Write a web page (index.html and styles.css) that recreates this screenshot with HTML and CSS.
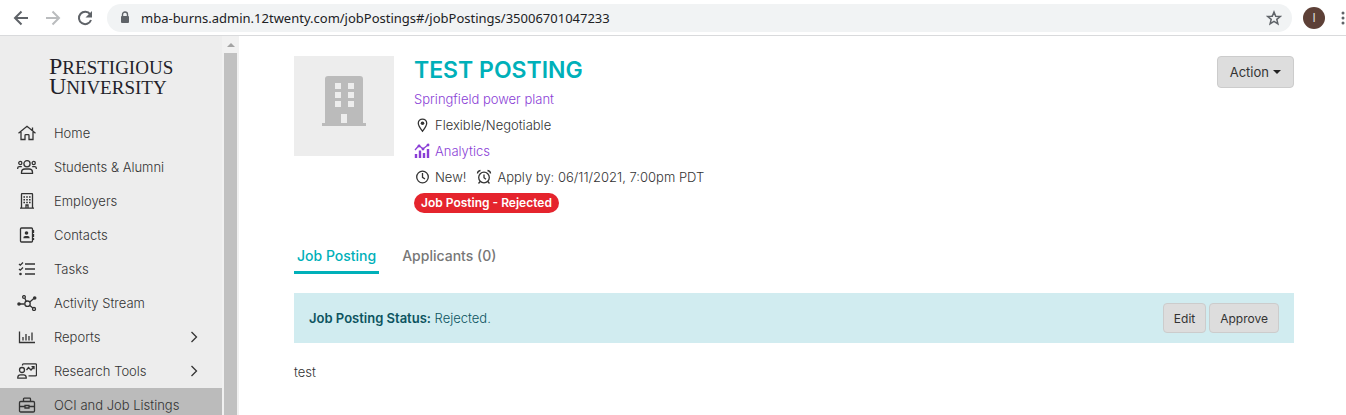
FILE: index.html
```html
<!DOCTYPE html>
<html lang="en">

<head>
	<title>Job Posting</title>
	<meta charset="utf-8">
	<meta name="viewport" content="width=device-width, initial-scale=1.0">
	<link rel="stylesheet" href="styles.css">
</head>

<body>
	<!-- browser bar -->
	<header class="browser">
		<button class="browser-btn" aria-label="Back">
			<svg width="16" height="16" viewBox="0 0 16 16" fill="none" stroke="#5f6368" stroke-width="2"><path d="M15 8H2M8.500 1.500L2 8l6.500 6.500"/></svg>
		</button>
		<button class="browser-btn" aria-label="Forward">
			<svg width="16" height="16" viewBox="0 0 16 16" fill="none" stroke="#babcbe" stroke-width="2"><path d="M1 8h13M7.500 1.500L14 8l-6.500 6.500"/></svg>
		</button>
		<button class="browser-btn" aria-label="Reload">
			<svg width="16" height="16" viewBox="0 0 16 16"><path d="M13.200 4.300A6.200 6.200 0 1 0 14 10" fill="none" stroke="#5f6368" stroke-width="2"/><path d="M15 1v6.500H8.500z" fill="#5f6368"/></svg>
		</button>
		<div class="address">
			<svg width="10" height="14" viewBox="0 0 10 14"><path d="M2.500 6V3.500a2.500 2.500 0 0 1 5 0V6" fill="none" stroke="#5f6368" stroke-width="1.400"/><rect x="1" y="5" width="8" height="7" rx="1" fill="#5f6368"/></svg>
			<input class="address-input" type="text" aria-label="Address" value="mba-burns.admin.12twenty.com/jobPostings#/jobPostings/35006701047233">
			<svg width="16" height="16" viewBox="0 0 16 16" fill="none" stroke="#5f6368" stroke-width="1.500"><path d="M8 2l1.700 4.200 4.600.300-3.500 2.900 1.100 4.400L8 11.400l-3.900 2.400 1.100-4.400-3.500-2.900 4.600-.300z"/></svg>
		</div>
		<button class="profile" aria-label="Profile">I</button>
		<button class="browser-menu" aria-label="Menu">
			<svg width="4" height="14" viewBox="0 0 4 14" fill="#5f6368"><circle cx="2" cy="2" r="1.500"/><circle cx="2" cy="7" r="1.500"/><circle cx="2" cy="12" r="1.500"/></svg>
		</button>
	</header>

	<div class="app">
		<aside class="sidebar">
			<div class="logo">
				<div class="logo-line">PRESTIGIOUS</div>
				<div class="logo-line">UNIVERSITY</div>
			</div>
			<nav>
				<a class="nav-item" href="#">
					<svg class="icon" viewBox="0 0 20 16"><path d="M1.500 8.200L10 1.300l8.500 6.900M15.500 5.500V2.500M4 7v7.500h4V10.500q0-.800.800-.800h2.400q.800 0 .800.800v4h4V7"/></svg>
					<span>Home</span>
				</a>
				<a class="nav-item" href="#">
					<svg class="icon" viewBox="0 0 20 16"><circle cx="10" cy="4.800" r="3.100"/><circle cx="3.300" cy="4" r="1.600"/><circle cx="16.700" cy="4" r="1.600"/><path d="M4.500 14.300v-1.200a3.300 3.300 0 0 1 3.300-3.100h4.400a3.300 3.300 0 0 1 3.300 3.100v1.200zM.700 10V9a1.500 1.500 0 0 1 1.500-1.400h2.600M19.300 10V9a1.500 1.500 0 0 0-1.500-1.400h-2.600"/></svg>
					<span>Students &amp; Alumni</span>
				</a>
				<a class="nav-item" href="#">
					<svg class="icon" viewBox="0 0 20 16"><path d="M4.500 15V1.200q0-.500.500-.500h10q.500 0 .500.500V15M3 15.200h14M9 15v-3h2v3"/><path d="M7.200 3.200v8M10 3.200v8M12.800 3.200v8" stroke-width="1.600" stroke-dasharray="1.500 1.300"/></svg>
					<span>Employers</span>
				</a>
				<a class="nav-item" href="#">
					<svg class="icon" viewBox="0 0 20 16"><rect x="3.500" y="1" width="12" height="14" rx="1"/><path d="M16.500 3v3M16.500 7v3M16.500 11v2"/><circle cx="9.500" cy="6" r="1.800" class="solid"/><path class="solid" d="M6.300 11.300q0-2.300 2-2.300h2.400q2 0 2 2.300z"/></svg>
					<span>Contacts</span>
				</a>
				<a class="nav-item" href="#">
					<svg class="icon" viewBox="0 0 20 16"><path d="M2 3l1.300 1.200L6 1.500M2 8l1.300 1.200L6 6.500"/><circle cx="3.500" cy="13" r="1.300" class="solid"/><path d="M8 3h10M8 8h10M8 13h10" stroke-width="1.700"/></svg>
					<span>Tasks</span>
				</a>
				<a class="nav-item" href="#">
					<svg class="icon" viewBox="0 0 20 16"><circle cx="10.500" cy="8.700" r="2.700"/><circle cx="7" cy="2" r="1.400"/><circle cx="17" cy="14" r="1.500"/><circle cx="2" cy="9" r="1.800" class="solid"/><circle cx="17.700" cy="3" r="1.800" class="solid"/><path d="M3 9h4.500M7.800 3.300l1.400 3M12.800 7l4-3.500M12.800 10.500l3 2.500"/></svg>
					<span>Activity Stream</span>
				</a>
				<a class="nav-item" href="#">
					<svg class="icon" viewBox="0 0 20 16"><path d="M2.500 2.500v11h15.500M6 11.500V8M9 11.500V5M12 11.500V7M15 11.500V3.500"/></svg>
					<span>Reports</span>
					<svg class="chevron" viewBox="0 0 8 12"><path d="M1.500 1l5 5-5 5"/></svg>
				</a>
				<a class="nav-item" href="#">
					<svg class="icon" viewBox="0 0 20 16"><path d="M5.500 2.500V1.800q0-1 1-1h12q1 0 1 1v10q0 1-1 1h-7M9.500 7l2-2.500 2.500 2.500 2.800-3M14.500 3.700H17v2.500"/><circle cx="5" cy="7" r="2.500"/><path d="M.800 15.200v-1a2.500 2.500 0 0 1 2.500-2.300h3.400a2.500 2.500 0 0 1 2.500 2.300v1z"/></svg>
					<span>Research Tools</span>
					<svg class="chevron" viewBox="0 0 8 12"><path d="M1.500 1l5 5-5 5"/></svg>
				</a>
				<a class="nav-item active" href="#">
					<svg class="icon" viewBox="0 0 20 16"><rect x="2.500" y="4.500" width="15" height="10.500" rx="1.200"/><path d="M6.500 4V2q0-.800.800-.800h5.400q.800 0 .800.800v2M2.500 9.500h5.500M12 9.500h5.500M8 8.500h4v2.500H8z"/></svg>
					<span>OCI and Job Listings</span>
				</a>
			</nav>
		</aside>
		<div class="scrollbar">
			<span class="scroll-up"></span>
			<span class="scroll-thumb"></span>
		</div>

		<main class="content">
			<section class="posting">
				<div class="posting-image">
					<svg width="44" height="50" viewBox="0 0 44 50"><path fill="#bbb" d="M6 0h32q3 0 3 3v44h3v3H0v-3h3V3q0-3 3-3z"/><path fill="#ededed" d="M13 7h6v6h-6zM26 7h6v6h-6zM13 16h6v6h-6zM26 16h6v6h-6zM13 25h6v6h-6zM26 25h6v6h-6zM19 38h6v9h-6z"/></svg>
				</div>
				<div class="posting-info">
					<h1>TEST POSTING</h1>
					<div class="line"><a href="#">Springfield power plant</a></div>
					<div class="line">
						<svg class="small-icon" viewBox="0 0 16 16"><path d="M8.500 14.300C5.500 10.500 4.300 9 4.300 6.300a4.200 4.200 0 0 1 8.400 0C12.700 9 11.500 10.500 8.500 14.300z"/><circle cx="8.500" cy="6.300" r="1.800" class="solid"/></svg>
						<span>Flexible/Negotiable</span>
					</div>
					<div class="line">
						<a href="#">
							<svg class="small-icon" viewBox="0 0 16 16"><path d="M1 7l4-4.500 4 3.500 5.500-4.500"/><path d="M2 15v-4M6 15V7.500M10 15v-5M14 15V6" stroke-width="2.400"/><circle cx="5" cy="3" r=".800"/><circle cx="9" cy="6" r=".800"/><circle cx="14" cy="2" r=".800"/></svg>
							<span>Analytics</span>
						</a>
					</div>
					<div class="line">
						<svg class="small-icon" viewBox="0 0 16 16"><circle cx="8.500" cy="8" r="5.800"/><path d="M8.500 4v4.300l2.500 1.700"/></svg>
						<span>New!</span>
						<svg class="small-icon alarm" viewBox="0 0 16 16"><circle cx="8" cy="8.500" r="5.300"/><path d="M8 5.500v3.200l2 1.500M4.200 12.500l-1.700 2M11.800 12.500l1.700 2M1.500 4.500q0-2.500 3-3M14.500 4.500q0-2.500-3-3"/></svg>
						<span>Apply by: 06/11/2021, 7:00pm PDT</span>
					</div>
					<div class="line"><span class="status">Job Posting - Rejected</span></div>
				</div>
				<button class="btn action">Action <span class="caret"></span></button>
			</section>

			<nav class="tabs">
				<a class="tab active" href="#">Job Posting</a>
				<a class="tab" href="#">Applicants (0)</a>
			</nav>

			<section class="alert">
				<p><strong>Job Posting Status:</strong> Rejected.</p>
				<div class="alert-buttons">
					<button class="btn">Edit</button>
					<button class="btn">Approve</button>
				</div>
			</section>

			<p class="description">test</p>
		</main>
	</div>
</body>

</html>
```

FILE: styles.css
```css
* {
	box-sizing: border-box;
}

body {
	margin: 0;
	height: 100vh;
	display: flex;
	flex-direction: column;
	overflow: hidden;
	background: white;
	color: #333;
	font-family: Inter, "Liberation Sans", sans-serif;
	font-size: 13px;
	font-weight: 300;
}

button {
	font-family: inherit;
	cursor: pointer;
}

a {
	color: #8a3ed6;
	text-decoration: none;
}

p {
	margin: 0;
}

svg {
	flex: none;
}

/* browser bar */
.browser {
	flex: none;
	height: 36px;
	display: flex;
	align-items: center;
	gap: 16px;
	padding-left: 13px;
	border-bottom: 1px solid #d9dadc;
}

.browser-btn,
.browser-menu {
	display: flex;
	padding: 0;
	border: 0;
	background: none;
}

.browser-menu {
	width: 5px;
}

.address {
	flex: 1;
	display: flex;
	align-items: center;
	height: 28px;
	margin-left: -2px;
	margin-right: -5px;
	padding: 0 10px 0 13px;
	border-radius: 14px;
	background: #f1f3f4;
}

.address-input {
	flex: 1;
	margin-left: 11px;
	padding: 0;
	border: 0;
	outline: 0;
	background: none;
	color: #202124;
	font-family: "Noto Sans", "Open Sans", sans-serif;
	font-size: 13px;
}

.profile {
	width: 22px;
	height: 22px;
	padding: 0;
	border: 0;
	border-radius: 50%;
	background: #5d4037;
	color: #ddd;
	font-size: 12px;
}

/* layout */
.app {
	flex: 1;
	display: flex;
	min-height: 0;
}

.sidebar {
	flex: none;
	width: 222px;
	overflow: hidden;
	background: #ededed;
}

.logo {
	padding: 20px 0 20px 49px;
	color: #231f2a;
	font-family: "Liberation Serif", serif;
	font-size: 19px;
	line-height: 20px;
}

.logo-line {
	height: 20px;
}

.logo-line::first-letter {
	font-size: 24px;
	line-height: 20px;
}

.nav-item {
	display: flex;
	align-items: center;
	height: 34px;
	padding: 0 24px 0 17px;
	color: #333;
}

.nav-item span {
	flex: 1;
	margin-left: 17px;
}

.nav-item.active {
	background: #bbb;
}

.icon,
.small-icon,
.chevron {
	fill: none;
	stroke: currentColor;
	stroke-width: 1.3;
}

.icon {
	width: 20px;
	height: 16px;
}

.chevron {
	width: 8px;
	height: 12px;
}

.small-icon {
	width: 16px;
	height: 16px;
}

.solid {
	fill: currentColor;
	stroke: none;
}

.scrollbar {
	flex: none;
	display: flex;
	flex-direction: column;
	width: 17px;
	padding: 7px 2px 0;
	background: #f1f1f1;
}

.scroll-up {
	align-self: center;
	border: 4px solid transparent;
	border-top: 0;
	border-bottom-color: #a3a3a3;
}

.scroll-thumb {
	flex: 1;
	margin-top: 6px;
	background: #c1c1c1;
}

/* posting */
.content {
	flex: 1;
	min-width: 0;
	padding: 20px 52px 0 55px;
}

.posting {
	display: flex;
	align-items: flex-start;
	gap: 20px;
}

.posting-image {
	display: flex;
	justify-content: center;
	width: 100px;
	height: 100px;
	padding-top: 20px;
	background: #ededed;
}

.posting-info {
	flex: 1;
}

h1 {
	margin: 0;
	padding-bottom: 2px;
	color: #00b0b9;
	font-size: 23px;
	font-weight: 600;
	line-height: 28px;
}

.line,
.line a {
	display: flex;
	align-items: center;
	height: 26px;
}

.small-icon + span {
	margin-left: 5px;
}

.alarm {
	margin-left: 10px;
}

.status {
	height: 20px;
	padding: 0 7px;
	border-radius: 10px;
	background: #e5242d;
	color: white;
	font-size: 12px;
	font-weight: 600;
	line-height: 20px;
}

.btn {
	height: 30px;
	padding: 0 10px;
	border: 1px solid #ccc;
	border-radius: 4px;
	background: #ddd;
	color: #333;
	font-size: 12px;
}

.btn.action {
	display: flex;
	align-items: center;
	gap: 4px;
	height: 32px;
	padding: 0 12px;
	font-size: 13px;
}

.caret {
	border: 4px solid transparent;
	border-top-color: #222;
	border-bottom: 0;
}

.tabs {
	display: flex;
	gap: 20px;
	margin-top: 28px;
}

.tab {
	padding: 0 3px 4px;
	border-bottom: 3px solid transparent;
	color: #777;
	font-size: 14px;
	font-weight: 500;
	line-height: 23px;
}

.tab.active {
	border-bottom-color: #00b0b9;
	color: #00b0b9;
}

.alert {
	display: flex;
	align-items: center;
	justify-content: space-between;
	height: 50px;
	margin-top: 19px;
	padding: 0 15px;
	background: #d1ecf0;
	color: #0c5460;
}

.alert strong {
	font-weight: 600;
}

.alert-buttons {
	display: flex;
	gap: 3px;
}

.description {
	margin-top: 19px;
	line-height: 20px;
}
```
